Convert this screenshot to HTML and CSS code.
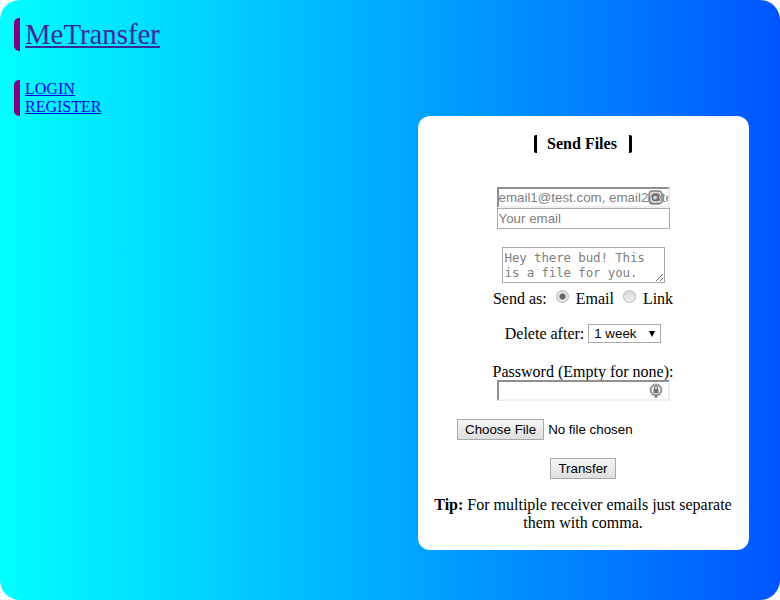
FILE: index.html
```html
<!DOCTYPE html>
<html lang="en">
<head>
  <meta charset="UTF-8">
  <title>MeTransfer</title>
  <link rel="stylesheet" href="styles.css">
</head>
<body>
  <div class="page">
    <div class="side-mark brand">
      <a class="brand-link" href="#">MeTransfer</a>
    </div>
    <div class="side-mark nav">
      <a href="#">LOGIN</a><br>
      <a href="#">REGISTER</a>
    </div>

    <form class="card" onsubmit="return false">
      <h4 class="card-title"><span>Send Files</span></h4>

      <div class="emails">
        <span class="field">
          <input class="input-filled" type="text" placeholder="email1@test.com, email2@test.com">
          <svg class="field-icon" width="15" height="15" viewBox="0 0 15 15">
            <rect x="1" y="1" width="13" height="13" rx="3.5" fill="#999" fill-opacity=".3" stroke="#808080" stroke-width="1.5"/>
            <circle cx="7.5" cy="7.5" r="3" fill="none" stroke="#666" stroke-width="1.3"/>
            <path d="M10.5 4.5v4q0 1.8 1.6 1.2" fill="none" stroke="#666" stroke-width="1.1"/>
          </svg>
        </span>
        <input class="input-plain" type="text" placeholder="Your email">
      </div>

      <textarea class="message" placeholder="Hey there bud! This is a file for you."></textarea>

      <div class="send-as">
        Send as:
        <input class="radio" type="radio" name="mode" checked> Email
        <input class="radio" type="radio" name="mode"> Link
      </div>

      <div class="delete-after">
        Delete after:
        <span class="select-wrap">
          <select class="select">
            <option>1 week</option>
            <option>1 day</option>
          </select>
        </span>
      </div>

      <div class="password">
        <label for="pw">Password (Empty for none):</label>
        <span class="field">
          <input class="input-filled" id="pw" type="password">
          <svg class="field-icon" width="14" height="16" viewBox="0 0 14 16">
            <circle cx="7" cy="7" r="5.4" fill="#f4f4f4" stroke="#999" stroke-width="2"/>
            <rect x="4.6" y="6" width="4.8" height="4.2" fill="#707070"/>
            <path d="M5.5 6V4.9a1.5 1.5 0 0 1 3 0V6" fill="none" stroke="#707070" stroke-width="1.1"/>
            <path d="M7 11v4" stroke="#888" stroke-width="2.4"/>
          </svg>
        </span>
      </div>

      <div class="file-row">
        <input class="file" type="file">
      </div>

      <button class="transfer" type="submit">Transfer</button>

      <p class="tip"><strong>Tip:</strong> For multiple receiver emails just separate them with comma.</p>
    </form>
  </div>
</body>
</html>
```

FILE: styles.css
```css
html, body {
  margin: 0;
  background: #fff;
}

body {
  font-family: "Liberation Serif", serif;
  font-size: 16px;
  color: #000;
}

.page {
  box-sizing: border-box;
  height: 600px;
  padding: 18px 31px 0 14px;
  border-radius: 20px;
  background: linear-gradient(to right, #00ffff, #0055ff);
}

.side-mark {
  border-left: 6px solid #800080;
  border-radius: 5px;
  padding-left: 5px;
}

.brand {
  font-size: 28.8px;
  line-height: 33px;
}

.brand-link {
  color: #3a2a9c;
}

.nav {
  margin-top: 29px;
  line-height: 18px;
}

.nav a {
  color: #0000ee;
}

.card {
  box-sizing: border-box;
  width: 331px;
  height: 434px;
  margin: 0 0 0 auto;
  padding: 19px 16px 0 15px;
  border-radius: 12px;
  background: #fff;
  text-align: center;
}

.card-title {
  margin: 0;
  font-size: 16px;
  line-height: 18px;
}

.card-title span {
  display: inline-block;
  padding: 0 12px 0 10px;
  border-left: 3px solid #000;
  border-right: 3px solid #000;
  border-radius: 2px;
}

.emails {
  margin-top: 34px;
  display: flex;
  flex-direction: column;
  align-items: center;
}

.field {
  position: relative;
  display: block;
  width: 173px;
  margin: 0 auto;
}

.field-icon {
  position: absolute;
  top: 3px;
  right: 7px;
}

input[type="text"], input[type="password"] {
  display: block;
  box-sizing: border-box;
  width: 173px;
  height: 21px;
  margin: 0;
  padding: 1px 0 2px;
  font-family: "Liberation Sans", sans-serif;
  font-size: 13.33px;
  background: #fff;
  outline: none;
}

input::placeholder, textarea::placeholder {
  color: #808080;
  opacity: 1;
}

.input-filled {
  border: 2px solid;
  border-color: #8f8f8f #eee #eee #8f8f8f;
}

input.input-plain {
  border: 1px solid #a9a9a9;
  padding-left: 1px;
}

.message {
  display: block;
  box-sizing: border-box;
  width: 163px;
  height: 36px;
  margin: 18px auto 0;
  padding: 2px;
  border: 1px solid #a9a9a9;
  border-radius: 0;
  font-family: "DejaVu Sans Mono", monospace;
  font-size: 12.5px;
  letter-spacing: -0.15px;
  line-height: 15px;
  overflow: hidden;
}

.send-as {
  margin-top: 7px;
  line-height: 18px;
}

.radio {
  appearance: none;
  box-sizing: border-box;
  width: 13px;
  height: 13px;
  margin: 0 3px 1px 5px;
  border: 1px solid #b4b4b4;
  border-radius: 50%;
  background: linear-gradient(#d8d8d8, #f2f2f2);
}

.radio:checked {
  background: radial-gradient(circle, #666 0 2.5px, #ddd 3.5px, #eee);
}

.delete-after {
  margin-top: 16px;
  line-height: 19px;
}

.select-wrap {
  position: relative;
  display: inline-block;
  vertical-align: top;
}

.select-wrap::after {
  content: "";
  position: absolute;
  top: 7px;
  right: 6px;
  border-left: 3.5px solid transparent;
  border-right: 3.5px solid transparent;
  border-top: 6px solid #000;
  pointer-events: none;
}

.select {
  appearance: none;
  display: block;
  box-sizing: border-box;
  width: 73px;
  height: 19px;
  padding: 0 0 0 5px;
  border: 1px solid #a9a9a9;
  border-radius: 0;
  background: #fff;
  font-family: "Liberation Sans", sans-serif;
  font-size: 13.33px;
  color: #000;
}

.password {
  margin-top: 20px;
  line-height: 17px;
}

.file-row {
  margin-top: 17px;
  text-align: left;
  padding-left: 24px;
  line-height: 21px;
}

.file {
  font-family: "Liberation Sans", sans-serif;
  font-size: 13.33px;
}

.file::file-selector-button {
  height: 21px;
  margin-right: 4px;
  padding: 0 7px;
  border: 1px solid #a9a9a9;
  border-radius: 0;
  background: linear-gradient(#f6f6f6, #dedede);
  font: inherit;
  color: #000;
}

.transfer {
  display: block;
  box-sizing: border-box;
  width: 66px;
  height: 21px;
  margin: 18px auto 0;
  padding: 0;
  border: 1px solid #a9a9a9;
  border-radius: 0;
  background: linear-gradient(#f6f6f6, #dedede);
  font-family: "Liberation Sans", sans-serif;
  font-size: 13.33px;
  color: #000;
}

.tip {
  margin: 17px 0 0;
  line-height: 18px;
}
```
